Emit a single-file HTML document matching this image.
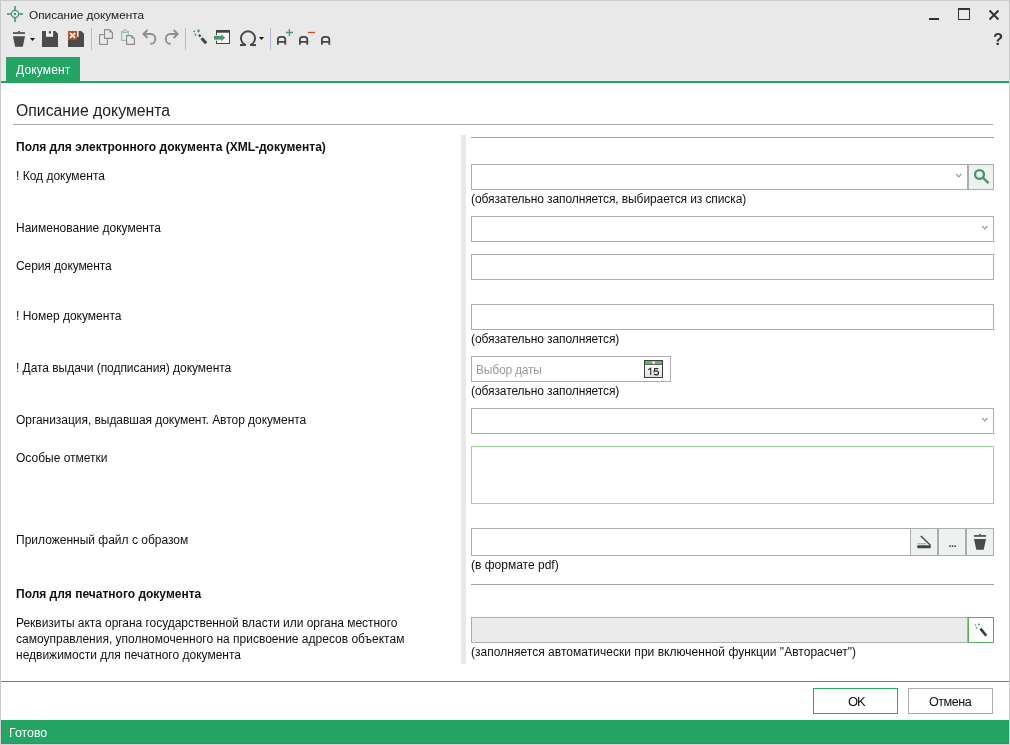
<!DOCTYPE html>
<html><head><meta charset="utf-8">
<style>
*{margin:0;padding:0;box-sizing:border-box}
html,body{width:1010px;height:745px;overflow:hidden;background:#fff}
body{position:relative;will-change:transform;font-family:"Liberation Sans",sans-serif;font-size:12px;color:#111}
.a{position:absolute}
.t{position:absolute;white-space:nowrap;line-height:16px;font-size:12px}
.win{left:0;top:0;width:1010px;height:745px;border:1px solid #c9c9c9}
.chrome{left:1px;top:1px;width:1008px;height:80px;background:#e9e9e9}
.inp{position:absolute;border:1px solid #abadb3;background:#fff}
.btn{position:absolute;border:1px solid #abadb3;background:#eef2ef}
.sep{position:absolute;width:1px;background:#b4bccb;top:28px;height:22px}
.ln{position:absolute;height:1px;background:#a0a0a0}
</style></head><body>
<div class="a win"></div>
<div class="a chrome"></div>

<!-- title bar -->

<div class="t" style="left:29px;top:7px;color:#222;font-size:11.8px">Описание документа</div>

<!-- window controls -->
<div class="a" style="left:929px;top:18px;width:10px;height:2px;background:#333"></div>
<div class="a" style="left:958px;top:8px;width:12px;height:12px;border:1px solid #333;border-top-width:2px"></div>
<svg class="a" style="left:988px;top:9px" width="12" height="12" viewBox="0 0 12 12"><path d="M1.5 1.5L10.5 10.5M10.5 1.5L1.5 10.5" stroke="#333" stroke-width="2"/></svg>
<div class="t" style="left:993px;top:29px;font-size:16.5px;font-weight:bold;color:#333;line-height:20px">?</div>

<!-- content -->
<div class="a" style="left:1px;top:81px;width:1008px;height:2px;background:#24a563"></div>
<div class="a" style="left:6px;top:57px;width:74px;height:24px;background:#24a563"></div>
<div class="t" style="left:16px;top:62px;color:#fff;letter-spacing:0.15px">Документ</div>

<div class="t" style="left:16px;top:101px;font-size:15.8px;line-height:20px;color:#222">Описание документа</div>
<div class="ln" style="left:13px;top:124px;width:980px;background:#a6a8b2"></div>

<div class="a" style="left:461px;top:135px;width:5px;height:529px;background:#e8e8e8"></div>
<div class="ln" style="left:471px;top:137px;width:523px"></div>
<div class="ln" style="left:471px;top:584px;width:523px"></div>

<!-- left labels -->
<div class="t" style="left:16px;top:139px;font-weight:bold">Поля для электронного документа (XML-документа)</div>
<div class="t" style="left:16px;top:168px">! Код документа</div>
<div class="t" style="left:16px;top:220px">Наименование документа</div>
<div class="t" style="left:16px;top:258px;letter-spacing:-0.1px">Серия документа</div>
<div class="t" style="left:16px;top:308px">! Номер документа</div>
<div class="t" style="left:16px;top:360px;letter-spacing:-0.043px">! Дата выдачи (подписания) документа</div>
<div class="t" style="left:16px;top:412px;letter-spacing:-0.043px">Организация, выдавшая документ. Автор документа</div>
<div class="t" style="left:16px;top:450px">Особые отметки</div>
<div class="t" style="left:16px;top:532px">Приложенный файл с образом</div>
<div class="t" style="left:16px;top:586px;font-weight:bold">Поля для печатного документа</div>
<div class="t" style="left:16px;top:615px;letter-spacing:-0.037px">Реквизиты акта органа государственной власти или органа местного</div>
<div class="t" style="left:16px;top:631px">самоуправления, уполномоченного на присвоение адресов объектам</div>
<div class="t" style="left:16px;top:647px">недвижимости для печатного документа</div>

<!-- right inputs -->
<div class="inp" style="left:471px;top:164px;width:497px;height:26px"></div>
<div class="btn" style="left:968px;top:164px;width:26px;height:26px"></div>
<div class="t" style="left:471px;top:191px;letter-spacing:-0.093px">(обязательно заполняется, выбирается из списка)</div>
<div class="inp" style="left:471px;top:216px;width:523px;height:26px"></div>
<div class="inp" style="left:471px;top:254px;width:523px;height:26px"></div>
<div class="inp" style="left:471px;top:304px;width:523px;height:26px"></div>
<div class="t" style="left:471px;top:331px;letter-spacing:-0.092px">(обязательно заполняется)</div>
<div class="inp" style="left:471px;top:356px;width:200px;height:26px"></div>
<div class="t" style="left:476px;top:362px;color:#9a9a9a;letter-spacing:-0.2px">Выбор даты</div>
<div class="t" style="left:471px;top:383px;letter-spacing:-0.092px">(обязательно заполняется)</div>
<div class="inp" style="left:471px;top:408px;width:523px;height:26px"></div>
<div class="inp" style="left:471px;top:446px;width:523px;height:58px;border-color:#9ad49a"></div>
<div class="inp" style="left:471px;top:528px;width:440px;height:28px"></div>
<div class="btn" style="left:910px;top:528px;width:28px;height:28px"></div>
<div class="btn" style="left:938px;top:528px;width:28px;height:28px"></div>
<div class="btn" style="left:966px;top:528px;width:28px;height:28px"></div>
<div class="t" style="left:471px;top:557px">(в формате pdf)</div>
<div class="inp" style="left:471px;top:617px;width:497px;height:26px;background:#ebebeb"></div>
<div class="inp" style="left:968px;top:617px;width:26px;height:26px;border-color:#5aae5a"></div>
<div class="t" style="left:471px;top:644px;letter-spacing:0.029px">(заполняется автоматически при включенной функции "Авторасчет")</div>

<!-- footer -->
<div class="a" style="left:1px;top:681px;width:1008px;height:1px;background:#24a563"></div>
<div class="a" style="left:813px;top:688px;width:85px;height:26px;border:1px solid #2ea66a"></div>
<div class="t" style="left:848px;top:694px;font-size:13px;letter-spacing:-1px">OK</div>
<div class="a" style="left:908px;top:688px;width:85px;height:26px;border:1px solid #abadb3"></div>
<div class="t" style="left:929px;top:694px;font-size:12.6px;letter-spacing:-0.5px">Отмена</div>
<div class="a" style="left:1px;top:720px;width:1008px;height:24px;background:#24a563;box-shadow:inset 1px -1px 0 #19a25b,inset -1px 0 0 #19a25b"></div>
<div class="a" style="left:0;top:720px;width:1px;height:25px;background:#d8d0d4"></div>
<div class="a" style="left:1009px;top:720px;width:1px;height:25px;background:#d8d0d4"></div>
<div class="a" style="left:0;top:744px;width:1010px;height:1px;background:#d8d0d4"></div>
<div class="t" style="left:9px;top:725px;color:#fff;font-size:12.4px">Готово</div>
<svg class="a" style="left:0;top:0" width="1010" height="745" viewBox="0 0 1010 745">
<!-- toolbar: trash -->
<g fill="#4b4b4b">
<rect x="18" y="31" width="2" height="1.5" rx="0.6"/>
<rect x="13" y="32.2" width="12" height="1.7"/>
<path d="M13 36.2H25L22.8 46.8H15.2Z"/>
</g>
<path d="M30 38H35L32.5 40.9Z" fill="#111"/>
<!-- save -->
<path d="M42 31H55.2L58 33.8V47H42Z" fill="#4b4b4b"/>
<rect x="46" y="31" width="7.1" height="5.8" fill="#f0f0f0"/>
<rect x="48.8" y="31.2" width="2.2" height="2.3" fill="#4b4b4b"/>
<!-- save & close -->
<path d="M68 31H81.2L84 33.8V47H68Z" fill="#4b4b4b"/>
<rect x="72" y="31" width="6.6" height="5.8" fill="#f0f0f0"/>
<rect x="68" y="31" width="9.1" height="8.9" fill="#b9512c"/>
<path d="M70 33L75.1 37.9M75.1 33L70 37.9" stroke="#fff" stroke-width="1.7"/>
<!-- separators -->
<rect x="91" y="28" width="1" height="22" fill="#b5bdca"/>
<rect x="185" y="28" width="1" height="22" fill="#b5bdca"/>
<rect x="270" y="28" width="1" height="22" fill="#b5bdca"/>
<!-- copy -->
<g stroke="#8c8c8c" stroke-width="1.1" fill="#e9e9e9">
<rect x="99.6" y="34.6" width="7.8" height="9.8"/>
<path d="M104.6 29.6H109.6L112.4 32.4V38.4H104.6Z"/>
</g>
<path d="M109.4 29.6V32.6H112.4Z" fill="#8c8c8c"/>
<!-- paste -->
<g stroke="#8cc4a6" stroke-width="1.1" fill="none">
<path d="M122.6 31.6H121.6V40.4H128.4V31.6H127.4"/>
<path d="M122.8 32.4L123.6 30.2Q125 28.8 126.4 30.2L127.2 32.4Z"/>
</g>
<g stroke="#8c8c8c" stroke-width="1.1" fill="#e9e9e9">
<path d="M126.6 35.6H131.6L134.4 38.4V44.4H126.6Z"/>
</g>
<path d="M131.4 35.6V38.6H134.4Z" fill="#8c8c8c"/>
<!-- undo / redo -->
<g stroke="#8e8e8e" stroke-width="1.9" fill="none">
<path d="M147.5 30L143.4 34L147.5 38M143.4 34H151A4.3 4.9 0 0 1 151 43.8H150.4"/>
<path d="M173.6 30L177.7 34L173.6 38M177.7 34H170.1A4.3 4.9 0 0 0 170.1 43.8H170.7"/>
</g>
<!-- wand -->
<g fill="#43966a">
<path d="M198.5 29L200 30.9L198.5 32.8L197 30.9Z"/>
<path d="M194.2 30.2L195.4 31.4L194.2 32.6L193 31.4Z"/>
<path d="M195.4 33.6L196.6 34.8L195.4 36L194.2 34.8Z"/>
</g>
<g stroke="#444" fill="none">
<path d="M198.9 34.9L200.6 36.5" stroke-width="2.2"/>
<path d="M201.6 38.2L206.2 43.2" stroke-width="3"/>
</g>
<!-- window with arrow -->
<rect x="217" y="32.7" width="12.5" height="10.3" fill="#f4f4f4"/>
<g fill="#444">
<rect x="216" y="30" width="14" height="2.7"/>
<rect x="229" y="32" width="1" height="12"/>
<rect x="216" y="43" width="14" height="1"/>
<rect x="216" y="32" width="1" height="3"/>
<rect x="216" y="40.8" width="1" height="3"/>
</g>
<rect x="214" y="35.9" width="7.6" height="3.7" fill="#43966a"/>
<path d="M221.2 34.3L225.2 37.75L221.2 41.2Z" fill="#43966a"/>
<!-- omega -->
<path d="M244.6 44.4A7 7 0 1 1 251.4 44.4" stroke="#484848" stroke-width="1.9" fill="none"/>
<rect x="240" y="44" width="6" height="2" fill="#484848"/>
<rect x="250" y="44" width="6" height="2" fill="#484848"/>
<path d="M259 37.1H264L261.5 40Z" fill="#111"/>
<!-- A+ A- A -->
<g stroke="#444" stroke-width="1.8" fill="none">
<path d="M277.9 44.8V39.6Q277.9 36.8 280.7 36.8H282.5Q285.3 36.8 285.3 39.6V44.8M277.9 41.8H285.3"/>
<path d="M299.9 44.8V39.6Q299.9 36.8 302.7 36.8H304.5Q307.3 36.8 307.3 39.6V44.8M299.9 41.8H307.3"/>
<path d="M321.9 44.8V39.6Q321.9 36.8 324.7 36.8H326.5Q329.3 36.8 329.3 39.6V44.8M321.9 41.8H329.3"/>
</g>
<path d="M289.4 29.1V35.9M286 32.5H292.9" stroke="#43966a" stroke-width="1.3"/>
<path d="M307.9 32.5H315" stroke="#b9512c" stroke-width="1.3"/>
<!-- combo chevrons -->
<g stroke="#9a9aa2" stroke-width="1.2" fill="none">
<path d="M956.2 174L958.8 176.8L961.4 174"/>
<path d="M982.2 226L984.8 228.8L987.4 226"/>
<path d="M982.2 418L984.8 420.8L987.4 418"/>
</g>
<!-- search -->
<circle cx="979.5" cy="174.5" r="4.4" stroke="#43966a" stroke-width="2.3" fill="none"/>
<path d="M983.2 178L988.6 183.2" stroke="#43966a" stroke-width="2.4"/>
<!-- calendar -->
<defs><linearGradient id="cg" x1="0" y1="0" x2="0" y2="1"><stop offset="0" stop-color="#ffffff"/><stop offset="1" stop-color="#dfe3e8"/></linearGradient></defs><rect x="644.5" y="360.5" width="18" height="17" fill="url(#cg)" stroke="#3f3f3f" stroke-width="1"/>
<rect x="645" y="361" width="17" height="3.2" fill="#5cb860"/>
<rect x="645" y="364.1" width="17" height="0.9" fill="#555"/>
<circle cx="653.6" cy="362.5" r="1.3" fill="#fff"/>
<path d="M648.3 369.8L650.7 368.2V375M658.3 368.6H654.7L654.2 371.5Q655.2 370.8 656.3 370.8Q658.5 371 658.5 372.9Q658.5 374.9 656.3 374.9Q654.8 374.9 653.9 374" stroke="#2a2a2a" stroke-width="1.1" fill="none"/>
<!-- scanner -->
<path d="M920.8 536L930.5 545.2" stroke="#444" stroke-width="1.4"/>
<rect x="917.5" y="543" width="8.6" height="1.3" fill="#8cc4a6"/>
<rect x="917.2" y="545.2" width="13.6" height="3" rx="0.8" fill="#444"/>
<!-- dots -->
<g fill="#555"><rect x="949.2" y="545.3" width="1.6" height="1.7"/><rect x="951.8" y="545.3" width="1.6" height="1.7"/><rect x="954.4" y="545.3" width="1.6" height="1.7"/></g>
<!-- file trash -->
<g fill="#4b4b4b">
<rect x="979.2" y="534" width="1.8" height="1.3" rx="0.5"/>
<rect x="974" y="535.1" width="12" height="1.7"/>
<path d="M974 539.1H986L983.7 549.8H976.3Z"/>
</g>
<!-- wand button -->
<g fill="#43966a">
<circle cx="975.5" cy="625" r="0.8"/>
<circle cx="978.9" cy="624.5" r="0.9"/>
<circle cx="976.5" cy="627.9" r="0.8"/>
</g>
<path d="M980.4 628.6L986.3 635.8" stroke="#3a3a3a" stroke-width="2.6"/>
<!-- title icon -->
<g fill="#40986a">
<rect x="7" y="13.2" width="3.8" height="1.6"/>
<rect x="19.2" y="13.2" width="3.8" height="1.6"/>
<rect x="14.2" y="6" width="1.6" height="4.8"/>
<rect x="14.2" y="17.2" width="1.6" height="4.8"/>
<circle cx="15" cy="14" r="1.2"/>
</g>
<circle cx="15" cy="14" r="3.65" stroke="#40986a" stroke-width="1.35" fill="none"/>
</svg>
</body></html>
